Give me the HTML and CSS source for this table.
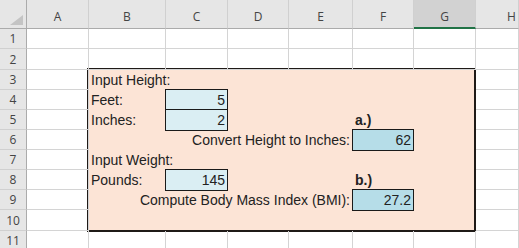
FILE: index.html
```html
<!DOCTYPE html>
<html lang="en">
  <head>
    <meta charset="UTF-8" />
    <meta name="viewport" content="width=device-width, initial-scale=1.0" />
    <title>BMI Worksheet</title>
    <link rel="stylesheet" href="styles.css">
  </head>
  <body>
    <div class="sheet">
      <!-- calculator block, covers B3:G10 -->
      <div class="box">
        <div class="brow"><div class="lbl">Input Height:</div></div>
        <div class="brow"><div class="lbl">Feet:</div><div class="in">5</div></div>
        <div class="brow"><div class="lbl">Inches:</div><div class="in">2</div><div class="tag">a.)</div></div>
        <div class="brow"><div class="calc">Convert Height to Inches:</div><div class="out">62</div></div>
        <div class="brow"><div class="lbl">Input Weight:</div></div>
        <div class="brow"><div class="lbl">Pounds:</div><div class="in">145</div><div class="tag">b.)</div></div>
        <div class="brow"><div class="calc">Compute Body Mass Index (BMI):</div><div class="out">27.2</div></div>
        <div class="brow"></div>
      </div>

      <div class="corner"><span class="tri"></span></div>
      <div class="col-head">A</div>
      <div class="col-head">B</div>
      <div class="col-head">C</div>
      <div class="col-head">D</div>
      <div class="col-head">E</div>
      <div class="col-head">F</div>
      <div class="col-head active">G</div>
      <div class="col-head last">H</div>

      <div class="row-head">1</div>
      <div class="cell"></div><div class="cell"></div><div class="cell"></div><div class="cell"></div>
      <div class="cell"></div><div class="cell"></div><div class="cell"></div><div class="cell"></div>

      <div class="row-head">2</div>
      <div class="cell"></div><div class="cell"></div><div class="cell"></div><div class="cell"></div>
      <div class="cell"></div><div class="cell"></div><div class="cell"></div><div class="cell"></div>

      <div class="row-head">3</div><div class="cell"></div><div class="cell"></div>
      <div class="row-head">4</div><div class="cell"></div><div class="cell"></div>
      <div class="row-head">5</div><div class="cell"></div><div class="cell"></div>
      <div class="row-head">6</div><div class="cell"></div><div class="cell"></div>
      <div class="row-head">7</div><div class="cell"></div><div class="cell"></div>
      <div class="row-head">8</div><div class="cell"></div><div class="cell"></div>
      <div class="row-head">9</div><div class="cell"></div><div class="cell"></div>
      <div class="row-head">10</div><div class="cell"></div><div class="cell"></div>

      <div class="row-head">11</div>
      <div class="cell"></div><div class="cell"></div><div class="cell"></div><div class="cell"></div>
      <div class="cell"></div><div class="cell"></div><div class="cell"></div><div class="cell"></div>
    </div>
  </body>
</html>
```

FILE: styles.css
```css
html,
body {
  margin: 0;
  padding: 0;
  overflow: hidden;
  background-color: #ffffff;
}

.sheet {
  display: grid;
  grid-template-columns: 27px 62px 77px 62px 61px 64px 61px 62px 1fr;
  grid-template-rows: 29px 20px 21px repeat(7, 20px) 21px 19px;
  width: 519px;
  height: 248px;
  font-family: "Liberation Sans", Arial, sans-serif;
  font-size: 14px;
  color: #222;
}

/* headers */
.corner,
.col-head,
.row-head {
  box-sizing: border-box;
  background-color: #e6e6e6;
  color: #444;
  font-family: "Open Sans", "Noto Sans", sans-serif;
  font-size: 12px;
}

.corner {
  position: relative;
  border-right: 1px solid #ababab;
  border-bottom: 1px solid #ababab;
}

.corner .tri {
  position: absolute;
  right: 3px;
  bottom: 3px;
  width: 0;
  height: 0;
  border-left: 13px solid transparent;
  border-bottom: 10px solid #c4c4c4;
}

.col-head {
  display: flex;
  align-items: flex-end;
  justify-content: center;
  padding-bottom: 3px;
  border-right: 1px solid #d0d0d0;
  border-bottom: 1px solid #ababab;
}

.col-head.active {
  background-color: #d2d2d2;
  border-bottom: 2px solid #217346;
  padding-bottom: 2px;
}

/* column H runs off the window, so its letter sits right of centre */
.col-head.last {
  padding-left: 29px;
}

.row-head {
  display: flex;
  align-items: center;
  justify-content: center;
  border-right: 1px solid #ababab;
  border-bottom: 1px solid #d0d0d0;
}

.cell {
  box-sizing: border-box;
  border-right: 1px solid #d4d4d4;
  border-bottom: 1px solid #d4d4d4;
}

/* calculator block */
.box {
  grid-column: 3 / 9;
  grid-row: 4 / 12;
  margin: -2px 0 -1px -2px;
  border: 2px solid #1f1a17;
  background-color: #fce4d6;
  display: grid;
  grid-template-rows: repeat(8, 20px);
}

.brow {
  display: grid;
  grid-template-columns: 77px 62px 61px 64px 61px 1fr;
  line-height: 20px;
  white-space: nowrap;
}

.lbl {
  grid-column: 1;
  padding-left: 2px;
}

.in,
.out {
  box-sizing: border-box;
  margin: -1px 0 0 -1px;
  border: 1px solid #1a1a1a;
  text-align: right;
  padding-right: 2px;
  line-height: 19px;
  padding-top: 1px;
}

.in {
  grid-column: 2;
  background-color: #daeef3;
}

.out {
  grid-column: 5;
  background-color: #b6dde8;
}

.tag {
  grid-column: 5;
  padding-left: 2px;
  font-weight: bold;
}

.calc {
  grid-column: 1 / 5;
  text-align: right;
  padding-right: 3px;
}
```
